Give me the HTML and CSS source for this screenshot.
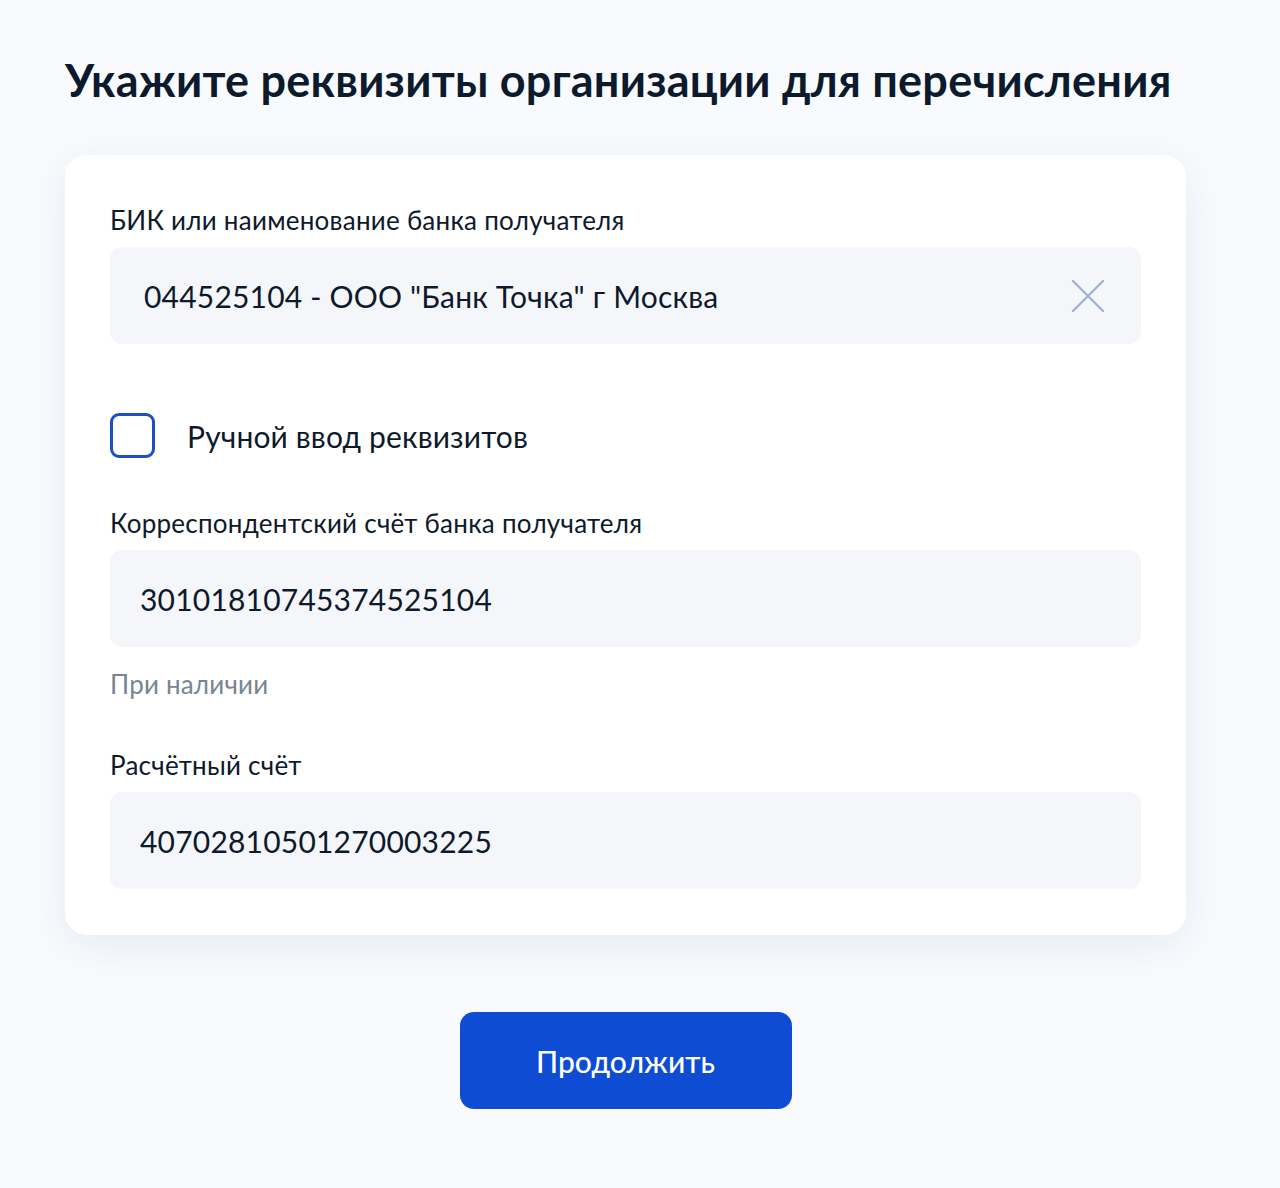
FILE: index.html
```html
<!DOCTYPE html>
<html lang="ru">
<head>
<meta charset="utf-8">
<link rel="stylesheet" href="styles.css">
</head>
<body>
<main class="page">
  <h1 class="title">Укажите реквизиты организации для перечисления</h1>
  <section class="card">
    <div class="field">
      <div class="label">БИК или наименование банка получателя</div>
      <div class="input input-bank">
        <span class="value">044525104 - ООО "Банк Точка" г Москва</span>
        <svg class="clear" width="34" height="34" viewBox="0 0 34 34"><path d="M2 2 L32 32 M32 2 L2 32" stroke="#a3b1d2" stroke-width="2.4" stroke-linecap="round" fill="none"/></svg>
      </div>
    </div>
    <label class="check-row">
      <span class="checkbox"></span>
      <span class="check-text">Ручной ввод реквизитов</span>
    </label>
    <div class="field">
      <div class="label">Корреспондентский счёт банка получателя</div>
      <div class="input"><span class="value">30101810745374525104</span></div>
      <div class="hint">При наличии</div>
    </div>
    <div class="field field-last">
      <div class="label">Расчётный счёт</div>
      <div class="input"><span class="value">40702810501270003225</span></div>
    </div>
  </section>
  <div class="actions">
    <button class="btn">Продолжить</button>
  </div>
</main>
</body>
</html>
```

FILE: styles.css
```css
html, body {
  margin: 0;
  padding: 0;
  background: #f8fafd;
}
body {
  font-family: Lato, "Noto Sans", sans-serif;
  color: #0d1b2e;
}
.page {
  padding: 52px 0 0 65px;
  width: 1121px;
}
.title {
  margin: 0;
  font-size: 45px;
  line-height: 56px;
  font-weight: 700;
  letter-spacing: 0.25px;
  color: #0c1a2d;
  white-space: nowrap;
}
.card {
  margin-top: 47px;
  background: #fff;
  border-radius: 22px;
  box-shadow: 0 10px 40px rgba(30, 60, 120, 0.08);
  padding: 48px 45px 46px;
  display: flex;
  flex-direction: column;
}
.label {
  font-size: 26px;
  line-height: 34px;
  letter-spacing: 0.25px;
  color: #0e1a2c;
  margin-bottom: 10px;
}
.input {
  height: 97px;
  background: #f4f6fa;
  border-radius: 12px;
  display: flex;
  align-items: center;
  padding: 0 30px;
  box-sizing: border-box;
}
.input-bank {
  padding: 0 36px 0 34px;
  justify-content: space-between;
}
.value {
  font-size: 30px;
  letter-spacing: 0.2px;
  color: #0e1a2c;
}
.clear {
  display: block;
}
.check-row {
  display: flex;
  align-items: center;
  gap: 32px;
  margin: 69px 0 48px;
}
.checkbox {
  width: 45px;
  height: 45px;
  box-sizing: border-box;
  border: 3px solid #1d4fc4;
  border-radius: 9px;
}
.check-text {
  font-size: 30px;
  letter-spacing: 0.15px;
  color: #0e1a2c;
}
.hint {
  font-size: 26px;
  line-height: 34px;
  letter-spacing: 0.2px;
  color: #7a8594;
  margin-top: 20px;
  margin-bottom: 47px;
}
.actions {
  display: flex;
  justify-content: center;
  margin-top: 77px;
  padding-bottom: 79px;
}
.btn {
  width: 332px;
  height: 97px;
  border: none;
  border-radius: 14px;
  background: #0d4cd3;
  color: #fff;
  font-family: Lato, "Noto Sans", sans-serif;
  font-size: 30px;
  font-weight: 500;
}
```
